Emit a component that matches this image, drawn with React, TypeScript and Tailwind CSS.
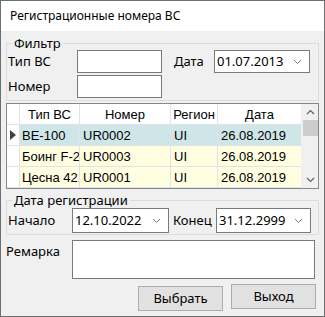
import React from 'react'

const font = "font-['Noto_Sans','Liberation_Sans',sans-serif]"

const Chevron = ({ up = false }: { up?: boolean }) => (
  <svg width="9" height="6" viewBox="0 0 9 6" className={up ? 'rotate-180' : ''}>
    <path d="M1 1 L4.5 4.5 L8 1" fill="none" stroke="#606060" strokeWidth="1.2" />
  </svg>
)

const Combo = ({ value, w }: { value: string; w: string }) => (
  <div className={`${w} h-[25px] border border-[#7a7a7a] bg-white flex items-center pl-[2px] pr-[7px] justify-between`}>
    <span className="text-[13px] leading-none">{value}</span>
    <svg width="9" height="6" viewBox="0 0 9 6">
      <path d="M1 1 L4.5 4.5 L8 1" fill="none" stroke="#7a7a7a" strokeWidth="1" />
    </svg>
  </div>
)

const rows = [
  { type: 'BE-100', num: 'UR0002', reg: 'UI', date: '26.08.2019', sel: true },
  { type: 'Боинг F-2', num: 'UR0003', reg: 'UI', date: '26.08.2019', sel: false },
  { type: 'Цесна 421', num: 'UR0001', reg: 'UI', date: '26.08.2019', sel: false },
]

export default function App() {
  return (
    <div className={`${font} w-[325px] h-[317px] border border-[#6e6e6e] bg-[#f0f0f0] flex flex-col text-black`}>
      <div className="h-[30px] bg-white flex items-center px-[9px] text-[12px]">
        Регистрационные номера ВС
      </div>
      <div className="flex flex-col px-[5px] pt-[4px]">
        <fieldset className="border border-[#dcdcdc] pl-[1px] pb-[2px]">
          <legend className="ml-[4px] px-[2px] text-[13px] leading-[16px]">Фильтр</legend>
          <div className="flex items-center h-[23px] mt-[-1px]">
            <span className="w-[69px] text-[13px]">Тип ВС</span>
            <div className="w-[85px] h-[23px] border border-[#7a7a7a] bg-white" />
            <span className="ml-[12px] w-[40px] text-[13px]">Дата</span>
            <div className="w-[96px] h-[23px] border border-[#7a7a7a] bg-white flex items-center pl-[2px] pr-[7px] justify-between">
              <span className="text-[13px] leading-none">01.07.2013</span>
              <svg width="9" height="6" viewBox="0 0 9 6">
                <path d="M1 1 L4.5 4.5 L8 1" fill="none" stroke="#7a7a7a" strokeWidth="1" />
              </svg>
            </div>
          </div>
          <div className="flex items-center h-[23px] mt-[2px]">
            <span className="w-[69px] text-[13px]">Номер</span>
            <div className="w-[85px] h-[23px] border border-[#7a7a7a] bg-white" />
          </div>
        </fieldset>

        <div className="mt-[2px] border border-[#828790] bg-[#f0f0f0] flex text-[13px] font-['Liberation_Sans',sans-serif]">
          <div className="flex flex-col">
            <div className="flex h-[21px] bg-white border-b border-[#dfe3e8]">
              <div className="w-[13px] border-r border-[#dfe3e8]" />
              <div className="w-[60px] border-r border-[#dfe3e8] text-center leading-[21px]">Тип ВС</div>
              <div className="w-[91px] border-r border-[#dfe3e8] text-center leading-[21px]">Номер</div>
              <div className="w-[47px] border-r border-[#dfe3e8] text-center leading-[21px]">Регион</div>
              <div className="w-[83px] text-center leading-[21px]">Дата</div>
            </div>
            {rows.map((r, i) => (
              <div key={i} className={`flex h-[21px] border-b border-[#dfe3e8] ${r.sel ? 'bg-[#cfe6e8]' : 'bg-[#fffee1]'}`}>
                <div className="w-[13px] bg-white border-r border-[#dfe3e8] flex items-center pl-[3px]">
                  {r.sel && (
                    <svg width="6" height="10" viewBox="0 0 6 10">
                      <path d="M0 0 L6 5 L0 10 Z" fill="#404040" />
                    </svg>
                  )}
                </div>
                <div className="w-[60px] border-r border-[#dfe3e8] pl-[2px] leading-[21px] overflow-hidden whitespace-nowrap">{r.type}</div>
                <div className="w-[91px] border-r border-[#dfe3e8] pl-[3px] leading-[21px]">{r.num}</div>
                <div className="w-[47px] border-r border-[#dfe3e8] pl-[3px] leading-[21px]">{r.reg}</div>
                <div className="w-[83px] pl-[3px] leading-[21px]">{r.date}</div>
              </div>
            ))}
          </div>
          <div className="ml-[2px] w-[17px] flex flex-col items-center bg-[#f0f0f0] py-[5px]">
            <Chevron up />
            <div className="mt-[5px] w-[15px] h-[16px] bg-[#cdcdcd]" />
            <div className="flex-1" />
            <Chevron />
          </div>
        </div>

        <fieldset className="mt-[3px] border border-[#dcdcdc] pl-[1px] pb-[1px]">
          <legend className="ml-[4px] px-[2px] text-[13px] leading-[16px]">Дата регистрации</legend>
          <div className="flex items-center">
            <span className="w-[64px] text-[13px]">Начало</span>
            <Combo value="12.10.2022" w="w-[97px]" />
            <span className="ml-[4px] w-[43px] text-[13px]">Конец</span>
            <Combo value="31.12.2999" w="w-[95px]" />
          </div>
        </fieldset>

        <div className="flex mt-[5px]">
          <span className="w-[66px] text-[13px] pt-[2px]">Ремарка</span>
          <div className="w-[243px] h-[39px] border border-[#7a7a7a] bg-white" />
        </div>

        <div className="flex justify-end gap-[8px] mt-[7px] pr-[3px]">
          <button className="w-[85px] h-[25px] bg-[#e1e1e1] border border-[#adadad] text-[13px]">Выбрать</button>
          <button className="w-[85px] h-[25px] bg-[#e1e1e1] border border-[#adadad] text-[13px] mt-[-2px]">Выход</button>
        </div>
      </div>
    </div>
  )
}
